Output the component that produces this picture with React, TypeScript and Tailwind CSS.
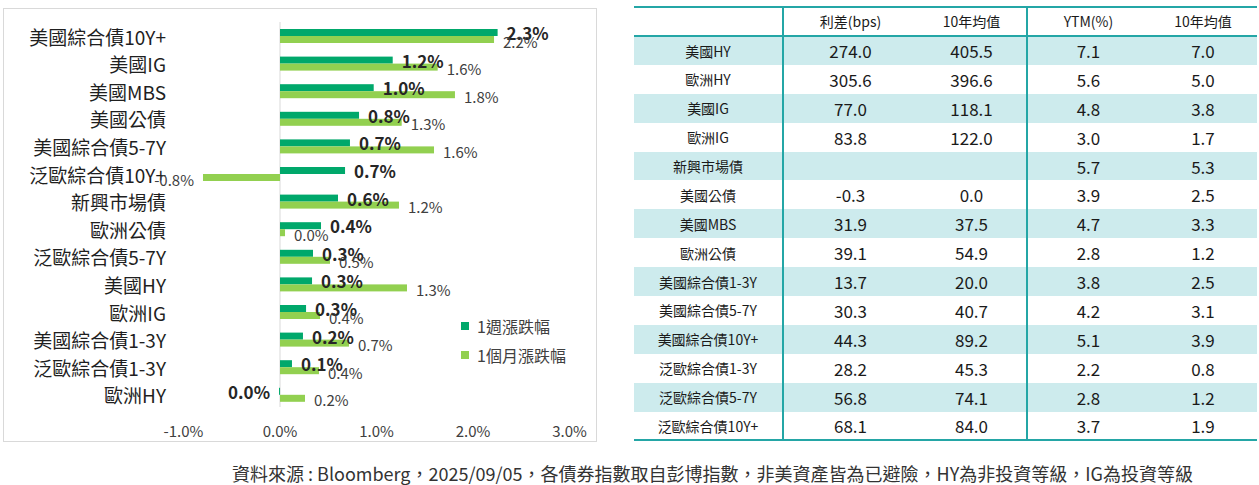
import React from 'react';

type Bond = { name: string; week: number; month: number; weekLabel: string; monthLabel: string };

const bonds: Bond[] = [
  { name: '美國綜合債10Y+', week: 2.255, month: 2.218, weekLabel: '2.3%', monthLabel: '2.2%' },
  { name: '美國IG', week: 1.168, month: 1.634, weekLabel: '1.2%', monthLabel: '1.6%' },
  { name: '美國MBS', week: 0.971, month: 1.813, weekLabel: '1.0%', monthLabel: '1.8%' },
  { name: '美國公債', week: 0.819, month: 1.261, weekLabel: '0.8%', monthLabel: '1.3%' },
  { name: '美國綜合債5-7Y', week: 0.725, month: 1.596, weekLabel: '0.7%', monthLabel: '1.6%' },
  { name: '泛歐綜合債10Y+', week: 0.674, month: -0.798, weekLabel: '0.7%', monthLabel: '-0.8%' },
  { name: '新興市場債', week: 0.601, month: 1.233, weekLabel: '0.6%', monthLabel: '1.2%' },
  { name: '歐洲公債', week: 0.425, month: 0.052, weekLabel: '0.4%', monthLabel: '0.0%' },
  { name: '泛歐綜合債5-7Y', week: 0.342, month: 0.518, weekLabel: '0.3%', monthLabel: '0.5%' },
  { name: '美國HY', week: 0.332, month: 1.316, weekLabel: '0.3%', monthLabel: '1.3%' },
  { name: '歐洲IG', week: 0.27, month: 0.415, weekLabel: '0.3%', monthLabel: '0.4%' },
  { name: '美國綜合債1-3Y', week: 0.238, month: 0.715, weekLabel: '0.2%', monthLabel: '0.7%' },
  { name: '泛歐綜合債1-3Y', week: 0.124, month: 0.404, weekLabel: '0.1%', monthLabel: '0.4%' },
  { name: '歐洲HY', week: -0.01, month: 0.259, weekLabel: '0.0%', monthLabel: '0.2%' },
];

const rows: string[][] = [
  ['美國HY', '274.0', '405.5', '7.1', '7.0'],
  ['歐洲HY', '305.6', '396.6', '5.6', '5.0'],
  ['美國IG', '77.0', '118.1', '4.8', '3.8'],
  ['歐洲IG', '83.8', '122.0', '3.0', '1.7'],
  ['新興市場債', '', '', '5.7', '5.3'],
  ['美國公債', '-0.3', '0.0', '3.9', '2.5'],
  ['美國MBS', '31.9', '37.5', '4.7', '3.3'],
  ['歐洲公債', '39.1', '54.9', '2.8', '1.2'],
  ['美國綜合債1-3Y', '13.7', '20.0', '3.8', '2.5'],
  ['美國綜合債5-7Y', '30.3', '40.7', '4.2', '3.1'],
  ['美國綜合債10Y+', '44.3', '89.2', '5.1', '3.9'],
  ['泛歐綜合債1-3Y', '28.2', '45.3', '2.2', '0.8'],
  ['泛歐綜合債5-7Y', '56.8', '74.1', '2.8', '1.2'],
  ['泛歐綜合債10Y+', '68.1', '84.0', '3.7', '1.9'],
];

const ZERO = 280;
const UNIT = 96.5;
const xOf = (v: number) => ZERO + v * UNIT;

function BarChart() {
  return (
    <div className="ml-[3px] mt-[8px] h-[434px] w-[594px] border border-[#d9d9d9] bg-white">
      <svg width={592} height={432} viewBox="4 9 592 432">
        <line x1={ZERO} y1={22} x2={ZERO} y2={407} stroke="#d9d9d9" strokeWidth={1} />
        {bonds.map((b, i) => {
          const c = 36 + i * 27.6;
          const wx = Math.min(xOf(b.week), ZERO);
          const ww = Math.max(Math.abs(b.week * UNIT), 1);
          const mx = Math.min(xOf(b.month), ZERO);
          const mw = Math.abs(b.month * UNIT);
          const wEnd = xOf(b.week);
          const mEnd = xOf(b.month);
          return (
            <g key={b.name}>
              <text x={166} y={c} textAnchor="end" dominantBaseline="central" fontSize={19} fill="#1f1f1f">
                {b.name}
              </text>
              <rect x={wx} y={c - 7} width={ww} height={7} fill="#00a86b" />
              <rect x={mx} y={c} width={mw} height={7} fill="#92d050" />
              <text
                x={b.week < 0 ? wEnd - 9 : wEnd + 9}
                y={c - 3.5}
                textAnchor={b.week < 0 ? 'end' : 'start'}
                dominantBaseline="central"
                fontSize={17}
                fontWeight={700}
                fill="#262626"
              >
                {b.weekLabel}
              </text>
              <text
                x={b.month < 0 ? mEnd - 9 : mEnd + 9}
                y={c + 5}
                textAnchor={b.month < 0 ? 'end' : 'start'}
                dominantBaseline="central"
                fontSize={15}
                fill="#404040"
              >
                {b.monthLabel}
              </text>
            </g>
          );
        })}
        {[-1, 0, 1, 2, 3].map((v) => (
          <text key={v} x={xOf(v)} y={430} textAnchor="middle" dominantBaseline="central" fontSize={15} fill="#404040">
            {v.toFixed(1)}%
          </text>
        ))}
        <rect x={461} y={322} width={8} height={8} fill="#00a86b" />
        <text x={477} y={326} dominantBaseline="central" fontSize={16} fill="#404040">
          1週漲跌幅
        </text>
        <rect x={461} y={351} width={8} height={8} fill="#92d050" />
        <text x={477} y={355} dominantBaseline="central" fontSize={16} fill="#404040">
          1個月漲跌幅
        </text>
      </svg>
    </div>
  );
}

function SpreadTable() {
  return (
    <table className="ml-[37px] mt-[6px] w-[623px] table-fixed border-collapse text-[#1a1a1a]">
      <colgroup>
        <col className="w-[149px]" />
        <col className="w-[134px]" />
        <col className="w-[110px]" />
        <col className="w-[122px]" />
        <col className="w-[108px]" />
      </colgroup>
      <thead>
        <tr className="h-[29px] border-y-2 border-[#24a6a6] text-[14px]">
          <th className="font-normal" />
          <th className="border-l-2 border-[#24a6a6] font-normal">利差(bps)</th>
          <th className="font-normal">10年均值</th>
          <th className="border-l-2 border-[#24a6a6] font-normal">YTM(%)</th>
          <th className="font-normal">10年均值</th>
        </tr>
      </thead>
      <tbody>
        {rows.map((r, i) => (
          <tr
            key={r[0]}
            className={`h-[28.9px] ${i % 2 === 0 ? 'bg-[#cdebed]' : 'bg-white'} ${i === rows.length - 1 ? 'border-b-2 border-[#24a6a6]' : ''}`}
          >
            <td className="p-0 text-center text-[14px] leading-none">{r[0]}</td>
            <td className="border-l-2 border-[#24a6a6] p-0 text-center text-[17px] leading-none">{r[1]}</td>
            <td className="p-0 text-center text-[17px] leading-none">{r[2]}</td>
            <td className="border-l-2 border-[#24a6a6] p-0 text-center text-[17px] leading-none">{r[3]}</td>
            <td className="p-0 text-center text-[17px] leading-none">{r[4]}</td>
          </tr>
        ))}
      </tbody>
    </table>
  );
}

export default function App() {
  return (
    <main className="h-[485px] w-[1259px] overflow-hidden bg-white font-['Noto_Sans_CJK_TC','Noto_Sans',sans-serif]">
      <div className="flex items-start">
        <BarChart />
        <SpreadTable />
      </div>
      <p className="mt-[19px] pl-[232px] text-[18px] leading-[24px] text-[#333333]">
        資料來源 : Bloomberg，2025/09/05，各債券指數取自彭博指數，非美資產皆為已避險，HY為非投資等級，IG為投資等級
      </p>
    </main>
  );
}
